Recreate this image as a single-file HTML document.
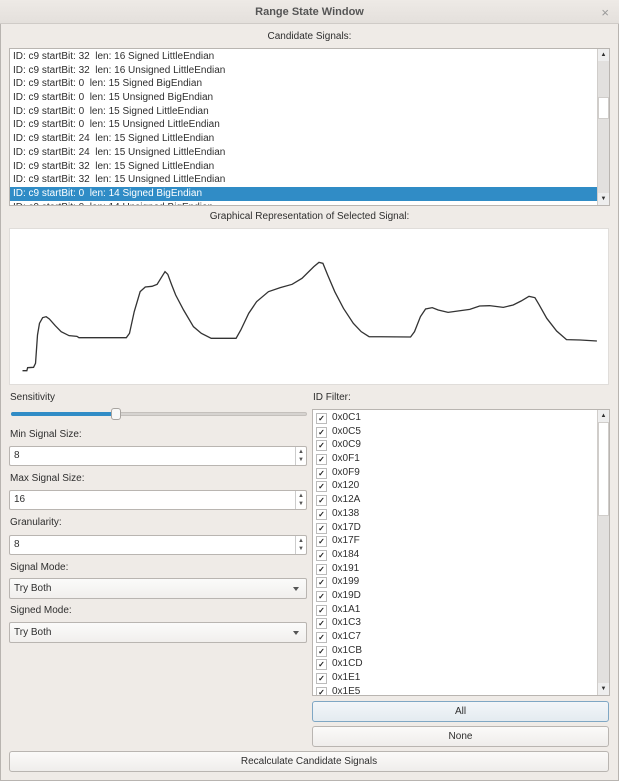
<!DOCTYPE html>
<html><head><style>
*{margin:0;padding:0;box-sizing:border-box}
body{width:619px;height:781px;background:#efebe7;font-family:"Liberation Sans",sans-serif;font-size:10px;color:#2e2e2e;position:relative;overflow:hidden}
.a{position:absolute}
.win{position:absolute;left:0;top:0;width:619px;height:781px;border:1px solid #b8b4b0;border-radius:4px 4px 0 0}
.title{position:absolute;left:0;top:0;width:619px;height:24px;background:linear-gradient(#eeeae6,#e4e0dc);border-bottom:1px solid #cfcbc7;text-align:center;line-height:24px;font-weight:bold;color:#555;font-size:11px}
.box{position:absolute;background:#fff;border:1px solid #b9b5b1}
.row{height:13.7px;line-height:13.7px;padding-left:3px;white-space:nowrap}
.sel{background:#308cc6;color:#fff}
.sb{position:absolute;right:0;top:0;bottom:0;width:12px;background:#e2e0de;border-left:1px solid #d0cdca}
.spin{position:absolute;background:#fff;border:1px solid #b9b5b1;border-radius:2px;height:20px;line-height:18px;padding-left:4px}
.spin .ar{position:absolute;right:0;top:0;width:11px;height:18px;border-left:1px solid #ccc;font-size:6px;line-height:8px;text-align:center;color:#555;padding-top:1px}
.combo{position:absolute;background:linear-gradient(#fbfbfa,#f1efed);border:1px solid #b9b5b1;border-radius:2px;height:21px;line-height:19px;padding-left:4px}
.combo:after{content:"";position:absolute;right:7px;top:8px;border-left:3px solid transparent;border-right:3px solid transparent;border-top:4px solid #555}
.btn{position:absolute;background:linear-gradient(#fbfaf9,#efedeb);border:1px solid #b9b5b1;border-radius:3px;height:21px;line-height:19px;text-align:center}
.chk{height:13.7px;line-height:13.7px;padding-left:19px;position:relative}
.chk:before{content:"✓";position:absolute;left:3px;top:2px;width:9px;height:9px;border:1px solid #bbb;font-size:8px;line-height:9px;text-align:center;font-weight:bold;color:#222}
</style></head><body>
<div class="win"></div>
<div class="title">Range State Window</div>
<div class="a" style="right:10px;top:5px;color:#999;font-size:13px">×</div>
<div class="a" style="left:0;width:619px;top:31px;text-align:center">Candidate Signals:</div>
<div class="box" style="left:9px;top:48px;width:601px;height:158px;overflow:hidden;padding-top:1px">
<div class="row">ID: c9 startBit: 32&nbsp; len: 16 Signed LittleEndian</div>
<div class="row">ID: c9 startBit: 32&nbsp; len: 16 Unsigned LittleEndian</div>
<div class="row">ID: c9 startBit: 0&nbsp; len: 15 Signed BigEndian</div>
<div class="row">ID: c9 startBit: 0&nbsp; len: 15 Unsigned BigEndian</div>
<div class="row">ID: c9 startBit: 0&nbsp; len: 15 Signed LittleEndian</div>
<div class="row">ID: c9 startBit: 0&nbsp; len: 15 Unsigned LittleEndian</div>
<div class="row">ID: c9 startBit: 24&nbsp; len: 15 Signed LittleEndian</div>
<div class="row">ID: c9 startBit: 24&nbsp; len: 15 Unsigned LittleEndian</div>
<div class="row">ID: c9 startBit: 32&nbsp; len: 15 Signed LittleEndian</div>
<div class="row">ID: c9 startBit: 32&nbsp; len: 15 Unsigned LittleEndian</div>
<div class="row sel" style="margin-right:12px">ID: c9 startBit: 0&nbsp; len: 14 Signed BigEndian</div>
<div class="row">ID: c9 startBit: 0&nbsp; len: 14 Unsigned BigEndian</div>
<div class="sb"><div class="a" style="top:0;left:0;width:11px;height:12px;font-size:6px;text-align:center;line-height:12px;background:#eee">▲</div><div class="a" style="top:48px;left:0;width:11px;height:22px;background:#fff;border:1px solid #d0cdca"></div><div class="a" style="bottom:0;left:0;width:11px;height:12px;font-size:6px;text-align:center;line-height:12px;background:#eee">▼</div></div>
</div>
<div class="a" style="left:0;width:619px;top:211px;text-align:center">Graphical Representation of Selected Signal:</div>
<div class="a" style="left:9px;top:228px;width:600px;height:157px;background:#fff;border:1px solid #e0ddda"></div>
<svg class="a" style="left:0;top:225px" width="619" height="165" viewBox="0 0 1568 495" preserveAspectRatio="none"><polyline fill="none" stroke="#333" stroke-width="1.3" vector-effect="non-scaling-stroke" points="57,437 68,437 70,428 85,427 90,415 95,330 100,295 108,278 117,275 125,282 140,302 155,320 175,332 195,334 200,338 320,338 328,325 340,260 355,200 368,186 385,184 398,178 410,155 418,140 425,148 435,180 445,210 465,255 490,305 510,325 535,340 598,340 610,315 630,265 650,230 680,200 710,188 740,178 765,160 795,125 808,112 818,115 830,150 848,200 870,250 895,295 915,320 935,335 1040,336 1050,320 1065,275 1078,252 1095,248 1110,255 1135,262 1160,258 1190,253 1215,243 1240,242 1275,247 1300,240 1320,228 1340,214 1355,218 1365,238 1385,280 1410,318 1435,344 1470,345 1512,348"/></svg>
<div class="a" style="left:10px;top:392px">Sensitivity</div>
<div class="a" style="left:11px;top:412px;width:296px;height:4px;border-radius:2px;background:#d6d3d0;border:1px solid #c4c0bc"></div>
<div class="a" style="left:11px;top:412px;width:104px;height:4px;border-radius:2px;background:#308cc6"></div>
<div class="a" style="left:111px;top:408px;width:10px;height:12px;border-radius:3px;background:#f8f8f7;border:1px solid #a8a4a0"></div>
<div class="a" style="left:10px;top:429px">Min Signal Size:</div>
<div class="spin" style="left:9px;top:446px;width:298px">8<div class="ar">▲<br>▼</div></div>
<div class="a" style="left:10px;top:473px">Max Signal Size:</div>
<div class="spin" style="left:9px;top:490px;width:298px">16<div class="ar">▲<br>▼</div></div>
<div class="a" style="left:10px;top:517px">Granularity:</div>
<div class="spin" style="left:9px;top:535px;width:298px">8<div class="ar">▲<br>▼</div></div>
<div class="a" style="left:10px;top:562px">Signal Mode:</div>
<div class="combo" style="left:9px;top:578px;width:298px">Try Both</div>
<div class="a" style="left:10px;top:605px">Signed Mode:</div>
<div class="combo" style="left:9px;top:622px;width:298px">Try Both</div>
<div class="a" style="left:313px;top:392px">ID Filter:</div>
<div class="box" style="left:312px;top:409px;width:298px;height:287px;overflow:hidden;padding-top:1px">
<div class="chk">0x0C1</div><div class="chk">0x0C5</div><div class="chk">0x0C9</div><div class="chk">0x0F1</div><div class="chk">0x0F9</div><div class="chk">0x120</div><div class="chk">0x12A</div><div class="chk">0x138</div><div class="chk">0x17D</div><div class="chk">0x17F</div><div class="chk">0x184</div><div class="chk">0x191</div><div class="chk">0x199</div><div class="chk">0x19D</div><div class="chk">0x1A1</div><div class="chk">0x1C3</div><div class="chk">0x1C7</div><div class="chk">0x1CB</div><div class="chk">0x1CD</div><div class="chk">0x1E1</div><div class="chk">0x1E5</div>
<div class="sb"><div class="a" style="top:0;left:0;width:11px;height:12px;font-size:6px;text-align:center;line-height:12px;background:#eee">▲</div><div class="a" style="top:12px;left:0;width:11px;height:94px;background:#fff;border:1px solid #d0cdca"></div><div class="a" style="bottom:0;left:0;width:11px;height:12px;font-size:6px;text-align:center;line-height:12px;background:#eee">▼</div></div>
</div>
<div class="btn" style="left:312px;top:701px;width:297px;background:linear-gradient(#f2f6f9,#e4ebf0);border-color:#7fa7c4">All</div>
<div class="btn" style="left:312px;top:726px;width:297px">None</div>
<div class="btn" style="left:9px;top:751px;width:600px">Recalculate Candidate Signals</div>
</body></html>
